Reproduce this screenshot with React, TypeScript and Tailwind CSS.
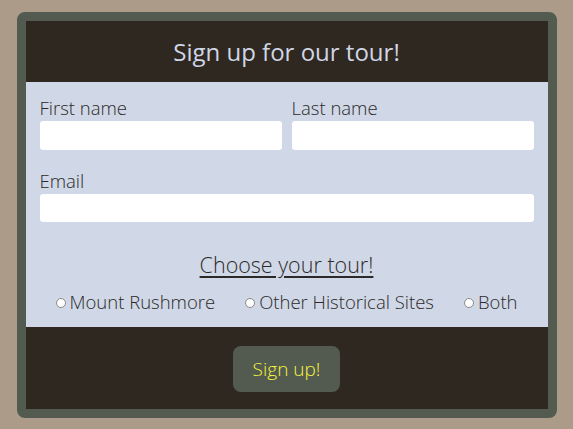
export default function App() {
  return (
    <div
      className="min-h-[429px] bg-[#ab9b88] pt-3"
      style={{ fontFamily: '"Open Sans", "Noto Sans", sans-serif' }}
    >
      <div className="mx-auto w-[540px] rounded-lg border-[9px] border-[#535b50] bg-[#2f2820]">
        {/* Header */}
        <div className="flex h-[61px] items-center justify-center">
          <h1 className="text-[24px] font-normal text-[#d0d6e6]">Sign up for our tour!</h1>
        </div>

        {/* Form */}
        <div className="h-[245px] bg-[#d0d7e6] px-[14px] pt-[13px] font-light text-[#2b2a28]">
          <div className="grid grid-cols-2 gap-x-[10px]">
            <div>
              <label className="block text-[18.5px] leading-[26px]">First name</label>
              <input className="h-[29px] w-full rounded-[3px] bg-white" />
            </div>
            <div>
              <label className="block text-[18.5px] leading-[26px]">Last name</label>
              <input className="h-[29px] w-full rounded-[3px] bg-white" />
            </div>
          </div>
          <div className="mt-[18px]">
            <label className="block text-[18.5px] leading-[26px]">Email</label>
            <input className="h-[28px] w-full rounded-[3px] bg-white" />
          </div>
          <div className="mt-[28px] text-center">
            <span className="text-[21.5px] leading-[30px] underline underline-offset-[3px]">
              Choose your tour!
            </span>
          </div>
          <div className="mt-[9px] flex items-center justify-center gap-[30px] text-[18.5px] leading-[26px]">
            {["Mount Rushmore", "Other Historical Sites", "Both"].map((t) => (
              <label key={t} className="flex items-center">
                <span className="mr-[4px] mt-[2px] h-[10px] w-[10px] rounded-full border border-[#8a8a8a] bg-white" />
                {t}
              </label>
            ))}
          </div>
        </div>

        {/* Footer */}
        <div className="flex h-[82px] justify-center pt-[19px]">
          <button className="h-[46px] w-[107px] rounded-lg bg-[#535b50] text-[19px] font-light text-[#f4f43a]">
            Sign up!
          </button>
        </div>
      </div>
    </div>
  );
}
